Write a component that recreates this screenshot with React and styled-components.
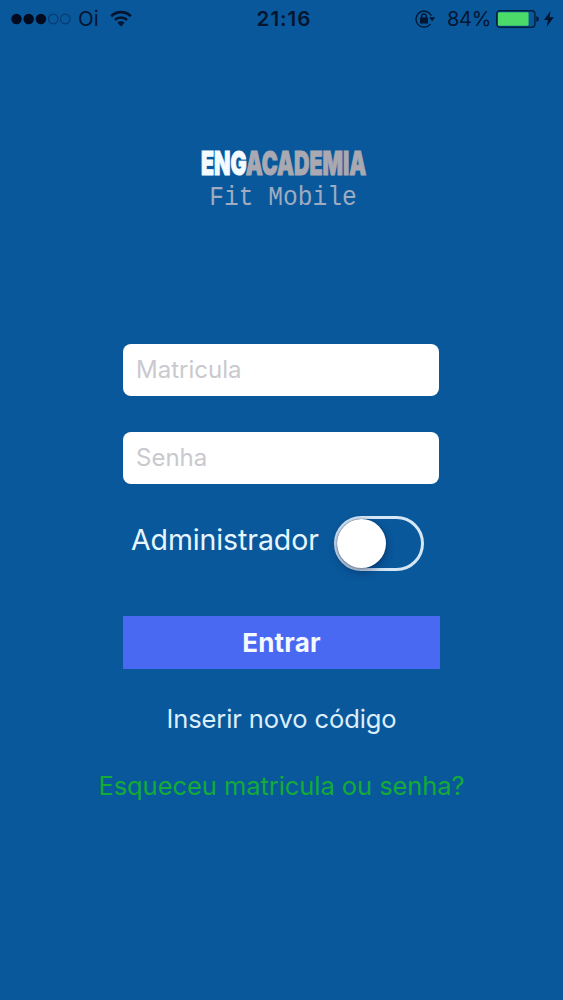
import React, { useState } from 'react';
import styled, { createGlobalStyle } from 'styled-components';

const GlobalStyle = createGlobalStyle`
  * {
    box-sizing: border-box;
  }
  body {
    margin: 0;
    background: #09589b;
    font-family: Inter, 'Liberation Sans', sans-serif;
  }
`;

const Screen = styled.div`
  display: flex;
  flex-direction: column;
  align-items: center;
  height: 1000px;
  overflow: hidden;
  background: #09589b;
`;

const StatusBar = styled.header`
  display: grid;
  grid-template-columns: 1fr auto 1fr;
  align-items: center;
  width: 100%;
  height: 37px;
  padding: 0 9px 0 11px;
  color: #04152f;
  font-size: 20px;
  line-height: 24px;
`;

const StatusGroup = styled.div`
  display: flex;
  align-items: center;
  justify-content: ${props => (props.$end ? 'flex-end' : 'flex-start')};

  svg {
    display: block;
    flex: none;
  }
`;

const Carrier = styled.span`
  margin: 0 11px 0 7px;
  font-size: 20.5px;
`;

const Clock = styled.span`
  padding-left: 3px;
  font-size: 20.5px;
  font-weight: 600;
  letter-spacing: 1px;
`;

const Percent = styled.span`
  margin: 0 5px 0 11px;
  letter-spacing: -0.3px;
`;

const Logo = styled.div`
  display: flex;
  flex-direction: column;
  align-items: center;
  margin-top: 106px;
  height: 72px;
  white-space: nowrap;
`;

const Brand = styled.div`
  height: 43px;
  font-size: 33px;
  font-weight: 900;
  line-height: 41px;
  color: #aaa9b2;
  -webkit-text-stroke: 1px;
  transform: translateX(2px) scaleX(0.648);

  span {
    color: #f4fbff;
  }
`;

const Tagline = styled.div`
  height: 24px;
  font-family: 'Liberation Mono', monospace;
  font-size: 27px;
  line-height: 24px;
  color: #9fabc0;
  transform: translateX(2px) scaleX(0.91);
`;

const Form = styled.form`
  display: flex;
  flex-direction: column;
  width: 317px;
  margin-top: 129px;
`;

const Input = styled.input`
  width: 316px;
  height: 52px;
  margin-bottom: 36px;
  padding: 0 13px 2px;
  border: none;
  border-radius: 8px;
  background: #ffffff;
  color: #333333;
  font-family: inherit;
  font-size: 24px;
  letter-spacing: 0;
  outline: none;

  &::placeholder {
    color: #c9c9ce;
    opacity: 1;
  }
`;

const SwitchRow = styled.label`
  display: flex;
  align-items: center;
  height: 56px;
  margin-top: -5px;
  padding-left: 8px;
`;

const SwitchLabel = styled.span`
  width: 203px;
  padding-bottom: 6px;
  color: #e6f6ff;
  font-size: 28.5px;
  line-height: 34px;
  letter-spacing: -0.1px;
  white-space: nowrap;
`;

const Track = styled.button`
  display: flex;
  align-items: center;
  justify-content: ${props => (props.$on ? 'flex-end' : 'flex-start')};
  flex: none;
  width: 90px;
  height: 55px;
  padding: 0;
  border: 3px solid #d5e6f5;
  border-radius: 28px;
  background: ${props => (props.$on ? '#4cd964' : 'transparent')};
`;

const Knob = styled.span`
  width: 49px;
  height: 49px;
  border-radius: 50%;
  background: #ffffff;
  box-shadow: 0 4px 8px rgba(0, 20, 60, 0.4), 0 0 2px rgba(0, 20, 60, 0.5);
`;

const Button = styled.button`
  width: 317px;
  height: 53px;
  margin-top: 45px;
  padding: 0;
  border: none;
  background: #4a69f2;
  color: #f4f8ff;
  font-family: inherit;
  font-size: 26px;
  font-weight: 650;
  letter-spacing: 0.2px;
`;

const TextLink = styled.a`
  margin-top: ${props => props.$top}px;
  color: ${props => props.$color};
  font-size: 25.5px;
  line-height: 32px;
  letter-spacing: ${props => props.$spacing}px;
  white-space: nowrap;
`;

const SignalDots = () => (
  <svg width="60" height="12" viewBox="0 0 60 12">
    {[5.5, 17.7, 29.9].map(x => (
      <circle key={x} cx={x} cy="6" r="5.2" fill="#020a20" />
    ))}
    {[42.3, 54.3].map(x => (
      <circle key={x} cx={x} cy="6" r="4.8" fill="none" stroke="#083a70" strokeWidth="1.2" />
    ))}
  </svg>
);

const WifiIcon = () => (
  <svg width="22" height="17" viewBox="0 0 22 17" fill="none" stroke="#04152f">
    <path d="M1.2 6.2a13.8 13.8 0 0 1 19.6 0" strokeWidth="2.7" />
    <path d="M4.9 10a8.6 8.6 0 0 1 12.2 0" strokeWidth="2.5" />
    <path d="M11 16.5 7.4 12.8a5.1 5.1 0 0 1 7.2 0z" fill="#04152f" stroke="none" />
  </svg>
);

const RotationLockIcon = () => (
  <svg width="21" height="18" viewBox="0 0 21 18" fill="none" stroke="#04152f">
    <path d="M16.4 5.6A8.1 8.1 0 1 0 15.4 14.2" strokeWidth="1.3" />
    <path d="M14.2 7.3h6l-3 4z" fill="#04152f" stroke="none" />
    <rect x="5" y="7.6" width="8" height="5.9" rx="0.6" fill="#04152f" stroke="none" />
    <path d="M6.7 8V6.2a2.3 2.3 0 0 1 4.6 0V8" strokeWidth="1.4" />
  </svg>
);

const BatteryIcon = () => (
  <svg width="43" height="18" viewBox="0 0 43 18">
    <rect x="0.7" y="0.8" width="38.2" height="16.4" rx="3" fill="none" stroke="#04203f" strokeWidth="1.4" />
    <rect x="2" y="2.2" width="30.6" height="13.6" rx="1.4" fill="#4bdb68" />
    <path d="M40.4 6q2.5.8 2.5 3t-2.5 3z" fill="#04152f" />
  </svg>
);

const BoltIcon = () => (
  <svg width="10" height="16" viewBox="0 0 10 16">
    <path d="M6.5 0 0 9h4L2.6 16 9.8 6.3H5.6z" fill="#04152f" />
  </svg>
);

const Charging = styled.span`
  margin-left: 5px;
`;

const App = () => {
  const [matricula, setMatricula] = useState('');
  const [senha, setSenha] = useState('');
  const [admin, setAdmin] = useState(false);

  const handleSubmit = event => {
    event.preventDefault();
    setMatricula('');
    setSenha('');
  };

  return (
    <Screen>
      <GlobalStyle />
      <StatusBar>
        <StatusGroup>
          <SignalDots />
          <Carrier>Oi</Carrier>
          <WifiIcon />
        </StatusGroup>
        <Clock>21:16</Clock>
        <StatusGroup $end>
          <RotationLockIcon />
          <Percent>84%</Percent>
          <BatteryIcon />
          <Charging>
            <BoltIcon />
          </Charging>
        </StatusGroup>
      </StatusBar>

      <Logo>
        <Brand>
          <span>ENG</span>ACADEMIA
        </Brand>
        <Tagline>Fit Mobile</Tagline>
      </Logo>

      <Form onSubmit={handleSubmit}>
        <Input
          placeholder="Matricula"
          value={matricula}
          onChange={event => setMatricula(event.target.value)}
        />
        <Input
          type="password"
          placeholder="Senha"
          value={senha}
          onChange={event => setSenha(event.target.value)}
        />
        <SwitchRow>
          <SwitchLabel>Administrador</SwitchLabel>
          <Track type="button" $on={admin} onClick={() => setAdmin(!admin)}>
            <Knob />
          </Track>
        </SwitchRow>
        <Button type="submit">Entrar</Button>
      </Form>

      <TextLink $top={34} $color="#dceefb" $spacing={-0.1}>
        Inserir novo código
      </TextLink>
      <TextLink $top={35} $color="#14ab38" $spacing={-0.06}>
        Esqueceu matricula ou senha?
      </TextLink>
    </Screen>
  );
};

export default App;
